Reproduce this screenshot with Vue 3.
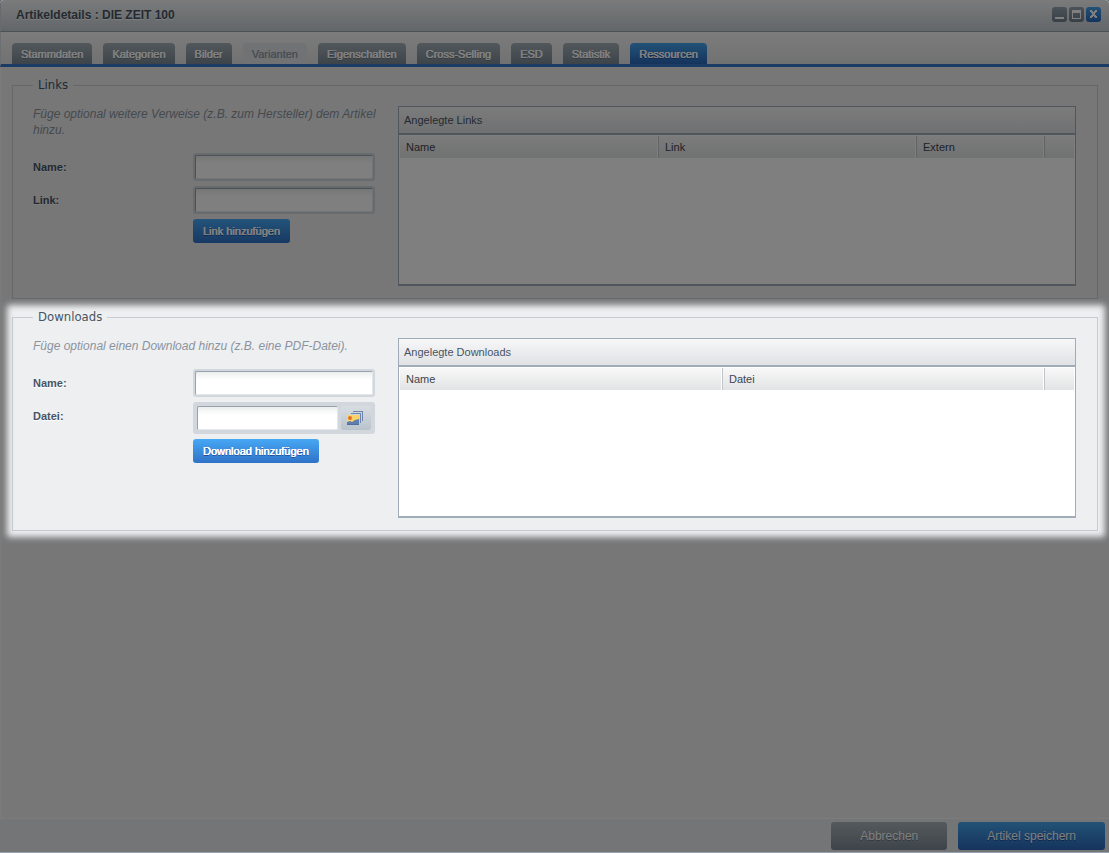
<script setup>
import { ref } from 'vue'

const tabs = ['Stammdaten', 'Kategorien', 'Bilder', 'Varianten', 'Eigenschaften', 'Cross-Selling', 'ESD', 'Statistik', 'Ressourcen']
const activeTab = ref('Ressourcen')
const linkName = ref('')
const linkUrl = ref('')
const downloadName = ref('')
const downloadFile = ref('')
</script>

<template>
  <div class="window">
    <header class="titlebar">
      <h1>Artikeldetails : DIE ZEIT 100</h1>
      <div class="tools">
        <button type="button" class="tool" aria-label="Minimieren">
          <svg viewBox="0 0 15 15"><path d="M3 10h9v2H3z" fill="#fff" /></svg>
        </button>
        <button type="button" class="tool" aria-label="Maximieren">
          <svg viewBox="0 0 15 15"><path fill-rule="evenodd" d="M3 3h9v9H3zM4 6v5h7V6z" fill="#fff" /></svg>
        </button>
        <button type="button" class="tool close" aria-label="Schließen">
          <svg viewBox="0 0 15 15"><path d="M4 3h2v1h1v1h1V4h1V3h2v2h-1v1H9v2h1v1h1v2H9v-1H8V9H7v1H6v1H4V9h1V8h1V6H5V5H4z" fill="#fff" /></svg>
        </button>
      </div>
    </header>

    <nav class="tabs" role="tablist">
      <button
        v-for="tab in tabs"
        :key="tab"
        type="button"
        role="tab"
        class="tab"
        :class="{ active: tab === activeTab }"
        :aria-selected="tab === activeTab"
        :disabled="tab === 'Varianten'"
        @click="activeTab = tab"
      >{{ tab }}</button>
    </nav>

    <main class="content">
      <section class="section">
        <fieldset>
          <legend>Links</legend>
          <div class="columns">
            <form class="form" @submit.prevent>
              <p>Füge optional weitere Verweise (z.B. zum Hersteller) dem Artikel hinzu.</p>
              <div class="row">
                <label for="link-name">Name:</label>
                <div class="frame"><input id="link-name" v-model="linkName" type="text" /></div>
              </div>
              <div class="row">
                <label for="link-url">Link:</label>
                <div class="frame"><input id="link-url" v-model="linkUrl" type="text" /></div>
              </div>
              <button type="submit" class="add">Link hinzufügen</button>
            </form>
            <div class="panel">
              <h2>Angelegte Links</h2>
              <table>
                <colgroup><col /><col /><col class="col-extern" /><col class="col-action" /></colgroup>
                <thead>
                  <tr><th>Name</th><th>Link</th><th>Extern</th><th></th></tr>
                </thead>
              </table>
            </div>
          </div>
        </fieldset>
      </section>

      <section class="section spotlight">
        <fieldset>
          <legend>Downloads</legend>
          <div class="columns">
            <form class="form" @submit.prevent>
              <p>Füge optional einen Download hinzu (z.B. eine PDF-Datei).</p>
              <div class="row">
                <label for="download-name">Name:</label>
                <div class="frame"><input id="download-name" v-model="downloadName" type="text" /></div>
              </div>
              <div class="row">
                <label for="download-file">Datei:</label>
                <div class="frame media">
                  <input id="download-file" v-model="downloadFile" type="text" />
                  <button type="button" class="browse" aria-label="Datei auswählen">
                    <svg viewBox="0 0 16 14" width="16" height="14">
                      <path d="M6 0h10v10h-1V1H6z" fill="#7183a6" />
                      <path d="M4 2h10v10h-1V3H4z" fill="#6b85b8" />
                      <path d="M0 4h12v10H0z" fill="#fbd468" />
                      <circle cx="3" cy="7" r="2" fill="#e5702b" />
                      <path d="M0 11l3-1 2 1 3-2 4-1v6H0z" fill="#5e7fae" />
                      <path d="M0 13h12v1H0z" fill="#4f6f9f" />
                    </svg>
                  </button>
                </div>
              </div>
              <button type="submit" class="add">Download hinzufügen</button>
            </form>
            <div class="panel">
              <h2>Angelegte Downloads</h2>
              <table>
                <colgroup><col /><col /><col class="col-action" /></colgroup>
                <thead>
                  <tr><th>Name</th><th>Datei</th><th></th></tr>
                </thead>
              </table>
            </div>
          </div>
        </fieldset>
      </section>
    </main>

    <footer class="footer">
      <button type="button" class="action cancel">Abbrechen</button>
      <button type="button" class="action save">Artikel speichern</button>
    </footer>
  </div>
</template>

<style>
body {
  margin: 0;
  background: #5d6670;
}
</style>

<style scoped>
.window {
  box-sizing: border-box;
  position: relative;
  min-height: 100vh;
  display: flex;
  flex-direction: column;
  overflow: hidden;
  border-bottom: 1px solid #98a3b0;
  border-radius: 4px 4px 0 0;
  background: #eeeff1;
  color: #475464;
  font-family: "Liberation Sans", Arial, sans-serif;
  font-size: 11px;
}

button {
  font-family: inherit;
  margin: 0;
  border: 0;
  cursor: pointer;
}

.titlebar {
  box-sizing: border-box;
  height: 32px;
  display: flex;
  align-items: center;
  justify-content: space-between;
  padding: 0 8px 2px 15px;
  border-left: 1px solid #d0d5da;
  border-bottom: 1px solid #99a3ab;
  background: linear-gradient(#f6f6f6, #c4ced3);
}

.titlebar h1 {
  margin: 0;
  font-size: 12px;
  line-height: 16px;
  color: #475464;
  text-shadow: 0 1px 0 #fff;
}

.tools {
  display: flex;
  gap: 2px;
}

.tool {
  width: 15px;
  height: 15px;
  padding: 0;
  border-radius: 3px;
  background: linear-gradient(#98a5b0, #70808d);
}

.tool.close {
  background: linear-gradient(#46a4ee, #2a68ba);
}

.tool svg {
  display: block;
  width: 15px;
  height: 15px;
}

.tabs {
  display: flex;
  align-items: flex-end;
  gap: 11px;
  height: 32px;
  padding-left: 11px;
  border-left: 1px solid #d8dce0;
  border-bottom: 3px solid #3478c8;
  background: linear-gradient(#f8f8f8, #e2e3e5);
}

.tab {
  height: 21px;
  padding: 0 9px;
  border-radius: 4px 4px 0 0;
  background: linear-gradient(#a4b0b8, #7c8a94);
  color: #fff;
  font-size: 11px;
  line-height: 23px;
  text-shadow: 0 0 0 #fff, 0 0 0 #fff, 0 1px 0 #66727c;
}

.tab:disabled {
  background: #e2e4e6;
  color: #939eaa;
  text-shadow: 0 0 0 #939eaa;
}

.tab.active {
  background: linear-gradient(#46a4ee, #2a68ba);
  text-shadow: 0 0 0 #fff, 0 0 0 #fff, 0 1px 0 #1c4c96;
}

.content {
  flex: 1;
  display: flex;
  flex-direction: column;
  gap: 10px;
  margin: 0 1px 0 0;
  padding: 10px;
  border-left: 2px solid #f4f5f6;
}

.section {
  position: relative;
}

/* Dims everything around the highlighted section, with a soft edge. */
.spotlight::after {
  content: "";
  position: absolute;
  z-index: 5;
  inset: -4px -7px -6px -5px;
  border-radius: 2px;
  box-shadow: 0 0 0 2000px rgba(0, 0, 0, 0.5);
  filter: blur(3px);
  pointer-events: none;
}

fieldset {
  margin: 0;
  min-width: 0;
  padding: 12px 21px 12px 20px;
  border: 1px solid #c9cdd1;
}

legend {
  padding: 0 5px 2px;
  font-family: "DejaVu Sans Condensed", Tahoma, sans-serif;
  font-size: 13px;
  line-height: 15px;
}

.columns {
  display: flex;
  gap: 20px;
}

.form {
  flex: none;
  display: flex;
  flex-direction: column;
  align-items: flex-start;
  gap: 5px;
  width: 345px;
}

.form p {
  margin: 0 0 10px;
  color: #8b949e;
  font-size: 12px;
  font-style: italic;
  line-height: 16px;
}

.row {
  display: flex;
  align-items: flex-start;
}

.row label {
  width: 160px;
  font-weight: bold;
  line-height: 28px;
  text-shadow: 0 1px 0 #fff;
}

.frame {
  box-sizing: border-box;
  width: 182px;
  height: 28px;
  padding: 2px;
  border-radius: 3px;
  background: #d1d7dd;
}

.frame input {
  box-sizing: border-box;
  width: 100%;
  height: 24px;
  padding: 2px 4px;
  border: 1px solid #e4e8eb;
  border-top-color: #98a2ae;
  border-left-color: #98a2ae;
  border-radius: 2px;
  outline: none;
  background: linear-gradient(#eceeee, #fff 8px);
  font-family: inherit;
  font-size: 12px;
}

.frame.media {
  display: flex;
  gap: 3px;
  height: 32px;
  padding: 4px;
}

.media input {
  flex: 1;
  min-width: 0;
}

.browse {
  display: flex;
  align-items: center;
  justify-content: center;
  width: 30px;
  height: 24px;
  padding: 0 2px 0 0;
  border-radius: 3px;
  background: linear-gradient(#d8dde2, #b9c3cc);
}

.add {
  height: 24px;
  margin-left: 160px;
  padding: 0 10px;
  border-radius: 3px;
  background: linear-gradient(#46a8f4, #2f72c8);
  color: #fff;
  font-size: 11px;
  line-height: 24px;
  text-shadow: 0 0 0 #fff, 0 0 0 #fff, 0 1px 0 #1c4c96;
}

.panel {
  box-sizing: border-box;
  flex: 1;
  min-width: 0;
  min-height: 180px;
  border: 1px solid #a0adb9;
  border-bottom-width: 2px;
  background: #fff;
}

.panel h2 {
  margin: 0;
  padding: 0 5px;
  border-bottom: 2px solid #a0adb9;
  background: linear-gradient(#f7f7f8, #e0e2e5);
  font-size: 11px;
  font-weight: normal;
  line-height: 26px;
}

table {
  width: calc(100% - 2px);
  margin: 1px;
  table-layout: fixed;
  border-collapse: separate;
  border-spacing: 0;
}

.col-extern {
  width: 128px;
}

.col-action {
  width: 30px;
}

th {
  height: 22px;
  padding: 0 6px;
  border-right: 1px solid #fff;
  background: linear-gradient(#f8f8f8, #e2e3e4);
  color: #3c4550;
  font-weight: normal;
  line-height: 22px;
  text-align: left;
}

th + th {
  border-left: 1px solid #c0c4c9;
}

th:last-child {
  border-right: 0;
}

.footer {
  display: flex;
  justify-content: flex-end;
  gap: 11px;
  padding: 3px 4px 2px;
  border-top: 1px solid #f8f8f8;
  background: #e9eaec;
}

.action {
  height: 28px;
  border-radius: 3px;
  color: #fff;
  font-size: 12px;
  line-height: 28px;
}

.cancel {
  padding: 0 29px;
  background: linear-gradient(#a9b3ba, #7c8993);
  text-shadow: 0 1px 0 #66727c;
}

.save {
  padding: 0 29px;
  background: linear-gradient(#46a4ee, #2a68ba);
  text-shadow: 0 1px 0 #1c4c96;
}
</style>
